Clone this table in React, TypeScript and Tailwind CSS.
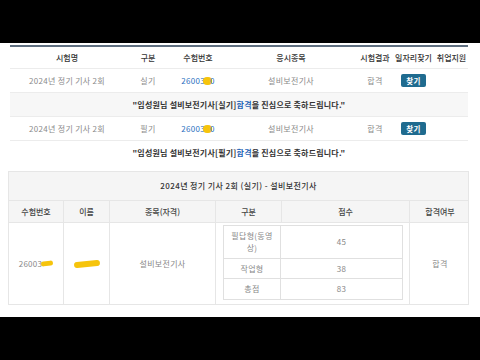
import React from "react";

const font = { fontFamily: '"Noto Sans CJK KR", "Noto Sans", sans-serif' };

function Blob({ className }: { className: string }) {
  return <span className={`inline-block rounded-full bg-[#f6c40c] ${className}`} />;
}

function ExamRow({ kind }: { kind: string }) {
  return (
    <div className="grid h-[24px] grid-cols-[114px_48px_52px_134px_34px_43px_33px] items-center border-b border-[#ececec] text-[8px] tracking-[0.3px] text-[#8a8a8a]">
      <div className="text-center">2024년 정기 기사 2회</div>
      <div className="text-center">{kind}</div>
      <div className="flex items-center justify-center text-[#2a6fc0]">
        <span>26003</span>
        <Blob className="-mx-[2px] h-[8px] w-[9px]" />
        <span>0</span>
      </div>
      <div className="text-center">설비보전기사</div>
      <div className="text-center">합격</div>
      <div className="flex justify-center">
        <span className="rounded-[2px] bg-[#1f6b8f] px-[5px] py-[1px] text-[7.5px] font-bold leading-[11px] text-white">
          찾기
        </span>
      </div>
      <div />
    </div>
  );
}

function Notice({ kind, gray }: { kind: string; gray?: boolean }) {
  return (
    <div
      className={`flex h-[24px] items-center justify-center text-[8px] font-bold tracking-[0.2px] text-[#333] ${
        gray ? "border-b border-[#ececec] bg-[#f7f7f7]" : ""
      }`}
    >
      "임성원님 설비보전기사[{kind}] <span className="text-[#1f63b5]">합격</span>을 진심으로 축하드립니다."
    </div>
  );
}

export default function App() {
  return (
    <div className="flex h-[360px] w-[480px] flex-col bg-black" style={font}>
      <div className="h-[43px]" />
      <div className="h-[274px] overflow-hidden bg-white">
        {/* 시험 목록 */}
        <div className="ml-[10px] mt-[2px] w-[458px] border-t-2 border-[#5f6f80]">
          <div className="grid h-[22px] grid-cols-[114px_48px_52px_134px_34px_43px_33px] items-center border-b border-[#ececec] text-[8px] font-medium text-[#333]">
            <div className="text-center">시험명</div>
            <div className="text-center">구분</div>
            <div className="text-center">수험번호</div>
            <div className="text-center">응시종목</div>
            <div className="whitespace-nowrap text-center">시험결과</div>
            <div className="whitespace-nowrap text-center">일자리찾기</div>
            <div className="whitespace-nowrap text-center">취업지원</div>
          </div>
          <ExamRow kind="실기" />
          <Notice kind="실기" gray />
          <ExamRow kind="필기" />
          <Notice kind="필기" />
        </div>

        {/* 상세 결과 */}
        <div className="ml-[8px] mt-[6px] w-[461px] border border-[#e6e6e6] text-[8px]">
          <div className="flex h-[29px] items-center justify-center border-b border-[#e6e6e6] bg-[#f5f5f5] font-medium tracking-[0.4px] text-[#333]">
            2024년 정기 기사 2회 (실기) - 설비보전기사
          </div>
          <div className="grid h-[22px] grid-cols-[55px_46px_106px_66px_128px_60px] border-b border-[#e6e6e6] bg-[#f5f5f5] font-medium text-[#444]">
            <div className="flex items-center justify-center border-r border-[#e6e6e6]">수험번호</div>
            <div className="flex items-center justify-center border-r border-[#e6e6e6]">이름</div>
            <div className="flex items-center justify-center border-r border-[#e6e6e6]">종목(자격)</div>
            <div className="flex items-center justify-center border-r border-[#e6e6e6]">구분</div>
            <div className="flex items-center justify-center border-r border-[#e6e6e6]">점수</div>
            <div className="flex items-center justify-center">합격여부</div>
          </div>
          <div className="grid h-[81px] grid-cols-[55px_46px_106px_194px_60px] tracking-[0.3px] text-[#888]">
            <div className="flex items-center justify-center border-r border-[#e6e6e6]">
              <span>26003</span>
              <Blob className="-ml-[1px] h-[5px] w-[12px] -rotate-6" />
            </div>
            <div className="flex items-center justify-center border-r border-[#e6e6e6]">
              <Blob className="h-[6px] w-[26px] -rotate-6" />
            </div>
            <div className="flex items-center justify-center border-r border-[#e6e6e6]">설비보전기사</div>
            <div className="border-r border-[#e6e6e6] pb-[4px] pl-[7px] pr-[6px] pt-[2px]">
              <div className="grid h-full grid-cols-[57px_1fr] grid-rows-[33px_20px_20px] border border-[#e0e0e0]">
                <div className="flex items-center justify-center border-b border-r border-[#e0e0e0] text-center leading-[12px]">
                  필답형(동영
                  <br />
                  상)
                </div>
                <div className="flex items-center justify-center border-b border-[#e0e0e0]">45</div>
                <div className="flex items-center justify-center border-b border-r border-[#e0e0e0]">작업형</div>
                <div className="flex items-center justify-center border-b border-[#e0e0e0]">38</div>
                <div className="flex items-center justify-center border-r border-[#e0e0e0]">총점</div>
                <div className="flex items-center justify-center">83</div>
              </div>
            </div>
            <div className="flex items-center justify-center">합격</div>
          </div>
        </div>
      </div>
      <div className="flex-1" />
    </div>
  );
}
